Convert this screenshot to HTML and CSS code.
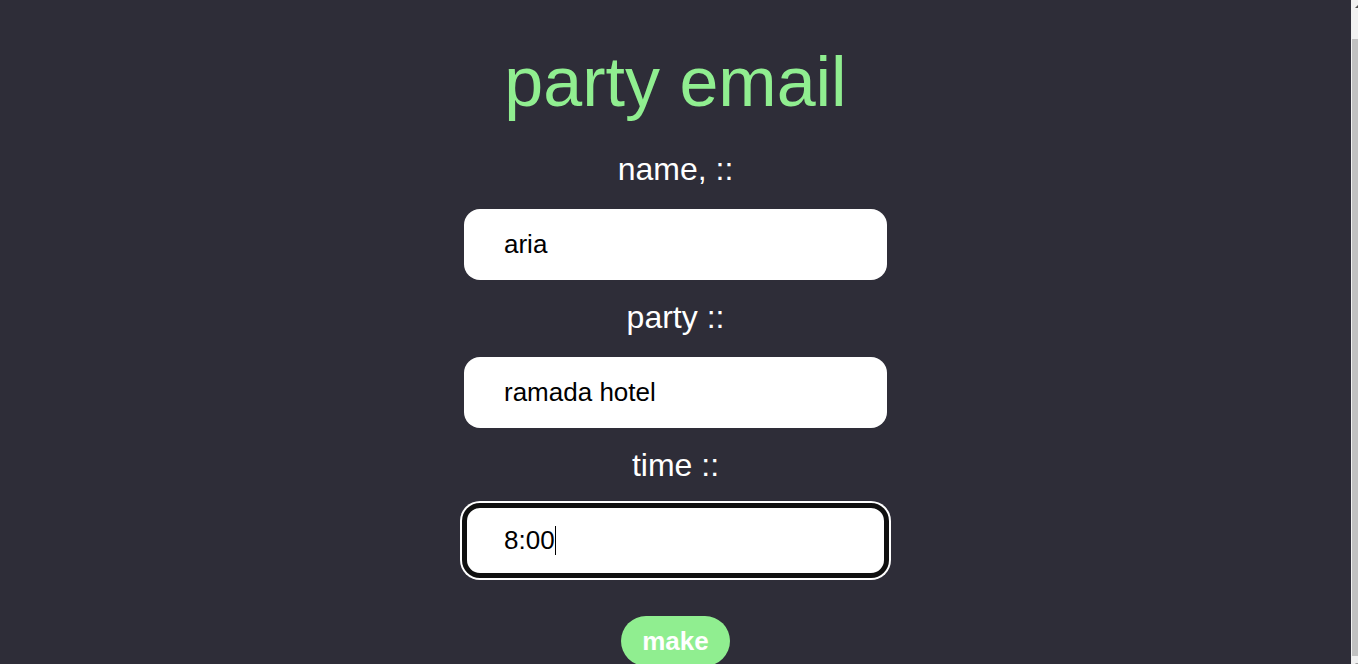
FILE: index.html
```html
<!DOCTYPE html>
<html lang="en">
<head>
<meta charset="utf-8">
<title>party email</title>
<link rel="stylesheet" href="styles.css">
</head>
<body>
<main class="page">
  <h1 class="title">party email</h1>
  <form class="form">
    <label class="label" for="name">name, ::</label>
    <input class="input" id="name" type="text" value="aria">
    <label class="label" for="party">party ::</label>
    <input class="input" id="party" type="text" value="ramada hotel">
    <label class="label" for="time">time ::</label>
    <span class="field">
      <input class="input input-focus" id="time" type="text" value="8:00">
      <span class="caret"></span>
    </span>
    <button class="make" type="button">make</button>
  </form>
</main>
<aside class="scrollbar" aria-hidden="true">
  <div class="sb-btn"><span class="sb-up"></span></div>
  <div class="sb-track"><div class="sb-thumb"></div></div>
  <div class="sb-btn sb-btn-down"><span class="sb-down"></span></div>
</aside>
</body>
</html>
```

FILE: styles.css
```css
html, body {
  margin: 0;
  padding: 0;
  height: 100%;
}

body {
  display: flex;
  overflow: hidden;
  background: #2e2d38;
  font-family: "Liberation Sans", Arial, sans-serif;
}

.page {
  flex: 1;
  display: flex;
  flex-direction: column;
  align-items: center;
  padding-top: 42px;
}

.title {
  margin: 0;
  font-size: 70px;
  line-height: 80px;
  font-weight: normal;
  color: #90ee90;
}

.form {
  display: flex;
  flex-direction: column;
  align-items: center;
  margin-top: 29px;
}

.label {
  font-size: 32px;
  line-height: 37px;
  color: #ffffff;
  margin-bottom: 21px;
}

.input {
  display: block;
  box-sizing: border-box;
  width: 423px;
  height: 71px;
  border: none;
  border-radius: 16px;
  background: #ffffff;
  padding: 0 0 0 40px;
  margin: 0 0 19px 0;
  font-family: "Liberation Sans", Arial, sans-serif;
  font-size: 26px;
  color: #000000;
  outline: none;
}

.field {
  position: relative;
  display: block;
}

.input-focus {
  outline: 5px solid #101010;
  outline-offset: -3px;
  box-shadow: 0 0 0 4px #ffffff;
  margin-bottom: 0;
}

.caret {
  position: absolute;
  left: 91px;
  top: 21px;
  width: 1px;
  height: 29px;
  background: #000000;
}

.make {
  margin-top: 40px;
  border: none;
  border-radius: 27px;
  background: #90ee90;
  color: #ffffff;
  font-family: "Liberation Sans", Arial, sans-serif;
  font-weight: bold;
  font-size: 26px;
  line-height: 30px;
  padding: 10px 21px;
}

.scrollbar {
  width: 7px;
  flex: none;
  display: flex;
  flex-direction: column;
  background: #f1f1f1;
  overflow: hidden;
}

.sb-btn {
  height: 15px;
  flex: none;
  position: relative;
}

.sb-up {
  position: absolute;
  left: 4px;
  top: 4px;
  width: 0;
  height: 0;
  border-left: 4px solid transparent;
  border-right: 4px solid transparent;
  border-bottom: 4px solid #505050;
}

.sb-down {
  position: absolute;
  left: 4px;
  top: 7px;
  width: 0;
  height: 0;
  border-left: 4px solid transparent;
  border-right: 4px solid transparent;
  border-top: 4px solid #a3a3a3;
}

.sb-track {
  flex: 1;
  display: flex;
  flex-direction: column;
}

.sb-thumb {
  margin: 24px 0 0 1px;
  height: 617px;
  background: #c1c1c1;
}
```
